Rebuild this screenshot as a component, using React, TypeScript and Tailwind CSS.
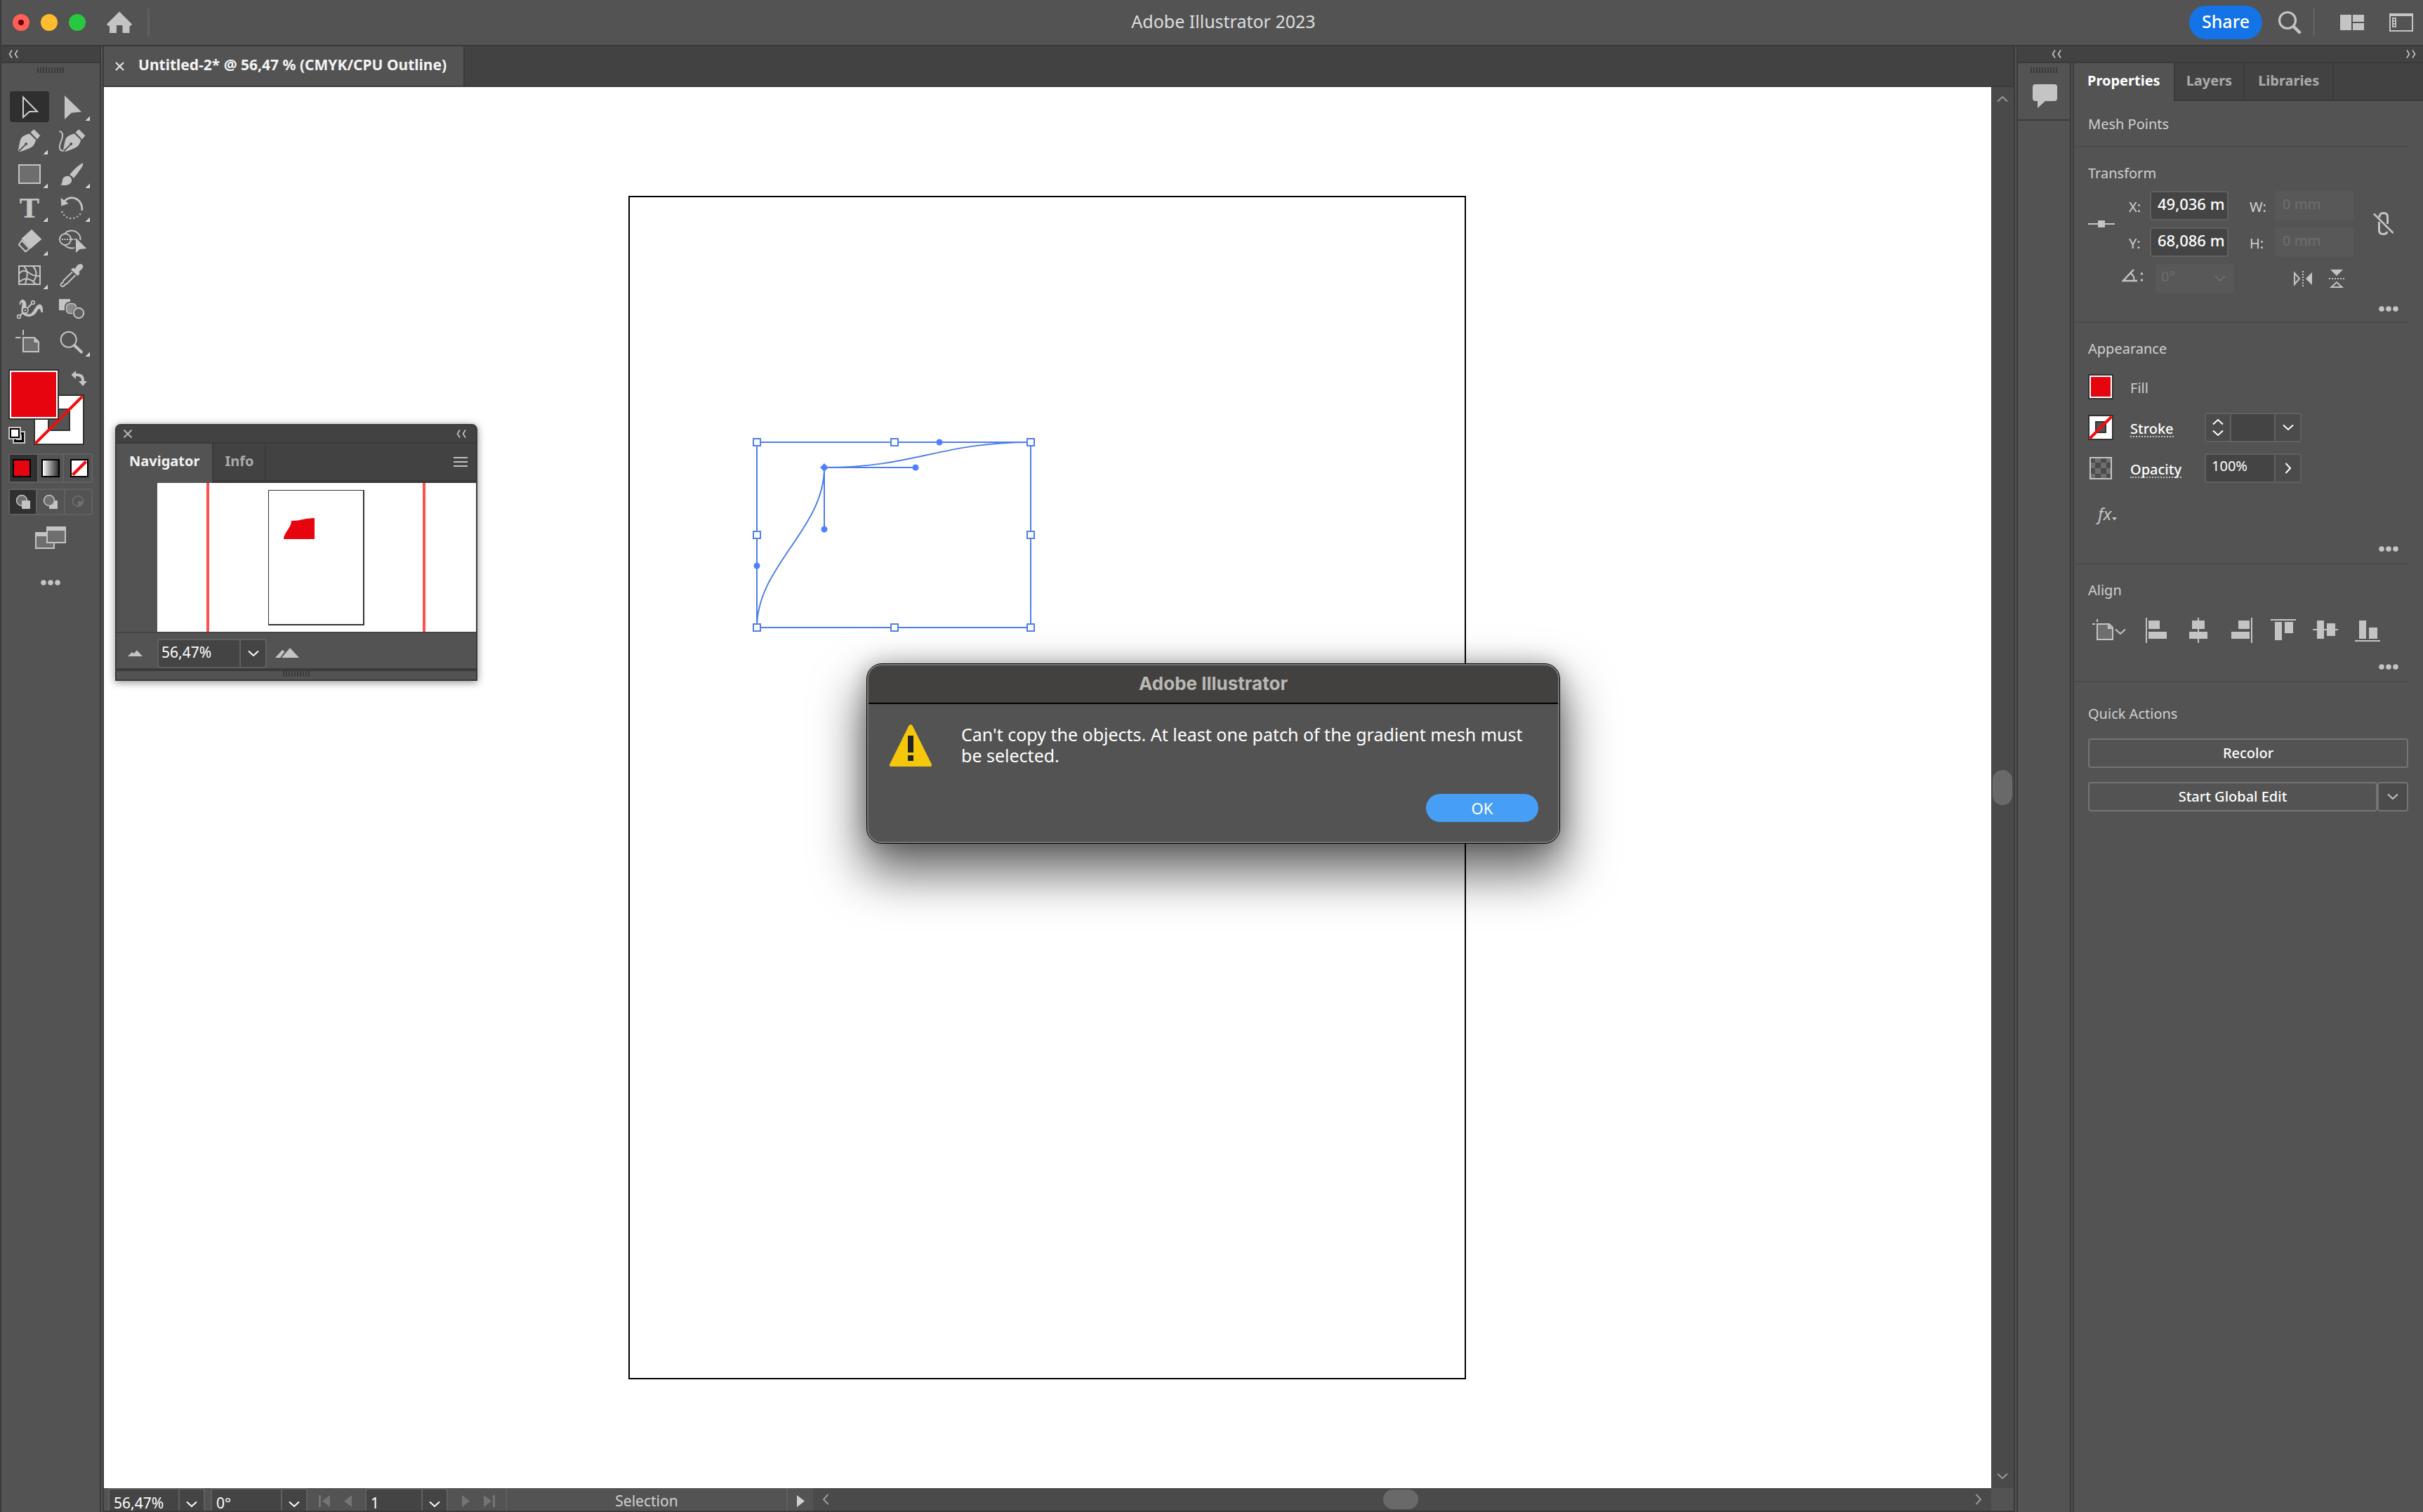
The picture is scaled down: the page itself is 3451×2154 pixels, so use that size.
import React from "react";

const fill = "#c4c4c4";
const bg = "#535353";

type IconProps = { className?: string };

const DoubleChevron = ({ flip = false }: { flip?: boolean }) => (
  <svg width="14" height="12" viewBox="0 0 14 12" fill="none" stroke="#c8c8c8" strokeWidth="1.6" className={flip ? "rotate-180" : ""}>
    <path d="M5 0.5 L1.5 6 L5 11.5 M13 0.5 L9.5 6 L13 11.5" />
  </svg>
);

const Chevron = ({ className = "text-white" }: IconProps) => (
  <svg width="16" height="10" viewBox="0 0 16 10" fill="none" stroke="currentColor" strokeWidth="2" className={className}>
    <path d="M1 1.5 L8 8 L15 1.5" />
  </svg>
);

const Grip = () => (
  <svg width="38" height="8" viewBox="0 0 38 8" stroke="#3a3a3a" strokeWidth="2">
    {[1, 5, 9, 13, 17, 21, 25, 29, 33, 37].map((x) => (
      <path key={x} d={`M${x} 0 V8`} />
    ))}
  </svg>
);

const Dots = ({ label }: { label: string }) => (
  <button aria-label={label}>
    <svg width="28" height="8" viewBox="0 0 28 8" fill={fill}>
      <circle cx="4" cy="4" r="3.8" />
      <circle cx="14" cy="4" r="3.8" />
      <circle cx="24" cy="4" r="3.8" />
    </svg>
  </button>
);

const Nib = () => (
  <>
    <path d="M34.3 8.3 L43.3 17 L39 22.5 L29.5 12.5 Z" fill={fill} />
    <path d="M28 14.5 L37.2 23.5 C36 27 35 30 32.5 32.5 C28 36 22 37.5 16 39.7 L12 39.5 L12 38 C13.5 31 14 24 16.7 20 C19.5 17 24 15.5 28 14.5 Z" fill={fill} />
    <path d="M13 39 L22.5 29.8" stroke={bg} strokeWidth="1.8" />
    <circle cx="23.2" cy="29" r="2" fill={bg} />
  </>
);

const tools: { name: string; more?: boolean; active?: boolean; art: React.ReactNode }[] = [
  {
    name: "Selection Tool",
    active: true,
    art: <path d="M19 10.5 V39 L28 31 L39 30.8 Z" fill="none" stroke="#d0d0d0" strokeWidth="2" />,
  },
  { name: "Direct Selection Tool", more: true, art: <path d="M18 8 V42 L27.7 32.7 L42 31.3 Z" fill={fill} /> },
  { name: "Pen Tool", more: true, art: <Nib /> },
  {
    name: "Curvature Tool",
    art: (
      <>
        <g transform="translate(4 0)">
          <Nib />
        </g>
        <path d="M10.5 11 C15 11.5 16 16 14.5 21 C12 28 7 38 16 39" fill="none" stroke={fill} strokeWidth="2" />
      </>
    ),
  },
  { name: "Rectangle Tool", more: true, art: <rect x="13" y="11" width="30" height="26" fill="#6e6e6e" stroke={fill} strokeWidth="2" /> },
  {
    name: "Paintbrush Tool",
    more: true,
    art: (
      <g fill={fill}>
        <path d="M44.3 8.5 C44.5 12 42 15.5 38.5 20 C36 23.5 33 27.5 30.5 30 C29.5 27.5 27.5 26 25 25.2 C29 20 34 15 38 12 C41 9.7 43 8 44.3 8.5 Z" />
        <path d="M24 27 C27 28 28.5 31 28 34 C27 39 19 41.5 12 39.3 C16 37 13.5 32 16.7 29 C19 27 21.5 26.5 24 27 Z" />
      </g>
    ),
  },
  {
    name: "Type Tool",
    more: true,
    art: (
      <text x="28" y="38" textAnchor="middle" fill={fill} className="font-['DejaVu_Serif'] text-[38px] font-bold">
        T
      </text>
    ),
  },
  {
    name: "Rotate Tool",
    more: true,
    art: (
      <g fill="none" stroke={fill}>
        <path d="M12.7 9.7 L13.3 21.5 L23.5 18 Z" fill={fill} stroke="none" />
        <path d="M17 16.5 C20 11 25 9.3 30 9.8 C38 11 43.5 18 42.8 28" strokeWidth="2.8" />
        <path d="M14 29 C17 37 24 40 30 39 C36 38 40 34 42.5 30" strokeWidth="2.2" strokeDasharray="2 3.2" />
      </g>
    ),
  },
  {
    name: "Eraser Tool",
    more: true,
    art: (
      <>
        <path d="M31 6.7 L45.3 20.7 L29.5 34.5 L16.5 20 Z" fill={fill} />
        <path d="M17 22.5 L12.8 28.5 L22.5 38.5 L27.8 34 Z" fill="none" stroke={fill} strokeWidth="2" strokeLinejoin="round" />
      </>
    ),
  },
  {
    name: "Shape Builder Tool",
    art: (
      <g fill="none" stroke={fill} strokeWidth="2">
        <circle cx="19" cy="21" r="8" />
        <path d="M18 13 C22 8 29 7.5 34 10 C39 13 41 17 40.5 22 M18 29 C21 33 27 34.5 32 33" />
        <path d="M14 21 H34" strokeDasharray="2 1.5" />
        <path d="M34 19 V40 L39.7 35 L49.3 34 Z" fill={fill} stroke="none" />
      </g>
    ),
  },
  {
    name: "Mesh Tool",
    more: true,
    art: (
      <g fill="none" stroke={fill} strokeWidth="2">
        <rect x="13" y="11" width="30" height="26" />
        <path d="M13 22 C18 16 22 17 28 21 C33 25 38 25.5 43 25" />
        <path d="M13 34 C20 28 26 28 32 32 L37 37" />
        <path d="M20 11 C25 17 26 22 24 28 L22 37" />
        <path d="M33 11 C38 17 39 23 36 29 L33 34" />
      </g>
    ),
  },
  {
    name: "Eyedropper Tool",
    art: (
      <>
        <path d="M27 16 L30 13.5 L33 15 C35 11 38 7.5 41.5 8.2 C45 9 45 13 42.5 15.5 L38.5 19 L39.5 22 L36.5 25 Z" fill={fill} />
        <path d="M29 19.5 L16.5 31.5 L15.5 34.5 C12.5 35.5 11.5 38 13.5 39.5 C15.5 40.8 17.5 39.5 18.5 37.5 L21.5 36 L33.5 24" fill="none" stroke={fill} strokeWidth="2" />
      </>
    ),
  },
  {
    name: "Puppet Warp Tool",
    art: (
      <g fill="none" stroke={fill}>
        <path d="M13.5 18 C14.5 9.500 20.500 8.500 23 15.500 C25 21 20 30 26 31.500 C34 33 35 19 42 17.500 C46 17.500 47.500 22 47 29 L44.500 29 C43.500 22.500 41 23 39 27 C35 35.500 24 38 18 31 C14 27 19 18 17.500 15 C16 14 15.500 16 15.500 18 Z" fill={fill} stroke="none" />
        <path d="M15 33 L20 28 M24 24 L31 17" strokeWidth="2" />
        <circle cx="13" cy="35" r="2.4" fill={bg} strokeWidth="1.6" />
        <circle cx="33" cy="15" r="2.4" fill={bg} strokeWidth="1.6" />
        <circle cx="22" cy="26" r="4" fill={bg} strokeWidth="1.6" />
        <circle cx="22" cy="26" r="1.2" fill={fill} stroke="none" />
      </g>
    ),
  },
  {
    name: "Blend Tool",
    art: (
      <>
        <rect x="10" y="10" width="16" height="16" fill={fill} />
        <rect x="20" y="16" width="15" height="15" rx="5" fill="#8a8a8a" stroke={bg} strokeWidth="4" />
        <rect x="20.5" y="16.5" width="14" height="14" rx="5" fill="#8a8a8a" stroke={fill} strokeWidth="1.5" />
        <circle cx="38" cy="30" r="9" fill={bg} />
        <circle cx="38" cy="30" r="7.2" fill="#606060" stroke={fill} strokeWidth="2" />
      </>
    ),
  },
  {
    name: "Artboard Tool",
    art: (
      <>
        <path d="M19 6 V13.5 M8 17 H15.5" stroke={fill} strokeWidth="2" />
        <path d="M19 17 H35 L41 23 V37 H19 Z" fill="#6e6e6e" stroke={fill} strokeWidth="2" />
        <path d="M34.5 17 V24 H41 Z" fill={fill} />
      </>
    ),
  },
  {
    name: "Zoom Tool",
    more: true,
    art: (
      <g fill="none" stroke={fill}>
        <circle cx="23.7" cy="19.7" r="11" strokeWidth="2" />
        <path d="M32 28 L42 37.5" strokeWidth="4" strokeLinecap="round" />
      </g>
    ),
  },
];

const Toolbar = () => (
  <aside className="flex flex-col w-[142px] shrink-0 bg-[#535353] border-r-2 border-[#3a3a3a]">
    <div className="h-6 bg-[#424242] border-b-2 border-[#3a3a3a] flex items-center px-2.5">
      <DoubleChevron />
    </div>
    <div className="flex justify-center pt-1.5 h-[38px]">
      <Grip />
    </div>
    <div className="grid grid-cols-2 pl-3 pr-2">
      {tools.map((tool) => (
        <button key={tool.name} aria-label={tool.name} className="h-12">
          <svg width="60" height="48" viewBox="0 0 60 48">
            {tool.active && <rect x="0" y="2" width="56" height="44" rx="4" fill="#2f2f2f" />}
            {tool.art}
            {tool.more && <path d="M54 37.5 V44 H47.5 Z" fill="#d8d8d8" />}
          </svg>
        </button>
      ))}
    </div>
    <svg className="mt-3.5 ml-2.5" width="114" height="108" viewBox="12 526 114 108">
      <rect x="49" y="563" width="70" height="70" fill="#fff" stroke="#323232" strokeWidth="2" />
      <rect x="69" y="583" width="30" height="30" fill={bg} stroke="#323232" strokeWidth="2" />
      <path d="M50.5 631.5 L117.5 564.5" stroke="#f20d0d" strokeWidth="4" />
      <rect x="13" y="527" width="70" height="70" fill="#fff" stroke="#323232" strokeWidth="2" />
      <rect x="16" y="530" width="64" height="64" fill="#e6040f" />
      <path d="M106 534 H110 Q118 534 118 542 V544" fill="none" stroke={fill} strokeWidth="4" />
      <path d="M108 528 V540 L101.5 534 Z M112 543 H124 L118 550 Z" fill={fill} />
      <rect x="19" y="615" width="16" height="16" fill="#000" stroke={fill} strokeWidth="2" />
      <rect x="24" y="620" width="6" height="6" fill="#000" stroke={fill} strokeWidth="2" />
      <rect x="13" y="609" width="16" height="16" fill="#fff" stroke={fill} strokeWidth="2" />
      <rect x="15" y="611" width="12" height="12" fill="#fff" stroke="#000" strokeWidth="2" />
    </svg>
    <div className="mt-3 mx-2.5 flex h-[42px] border-2 border-[#606060] rounded">
      <button aria-label="Color" className="flex-1 flex items-center justify-center pr-1 bg-[#303030]">
        <span className="size-[26px] bg-[#e6040f] border-2 border-black"></span>
      </button>
      <button aria-label="Gradient" className="flex-1 flex items-center justify-center border-x-2 border-[#606060]">
        <span className="size-[26px] bg-linear-to-r from-white to-[#333] border-2 border-black"></span>
      </button>
      <button aria-label="None" className="flex-1 flex items-center justify-center pl-1">
        <svg width="26" height="26" viewBox="0 0 26 26">
          <rect x="1" y="1" width="24" height="24" fill="#fff" stroke="#000" strokeWidth="2" />
          <path d="M3.5 22.5 L22.5 3.5" stroke="#f20d0d" strokeWidth="4.5" />
        </svg>
      </button>
    </div>
    <div className="mt-2 mx-2.5 flex h-[38px] border-2 border-[#606060] rounded">
      <button aria-label="Draw Normal" className="flex-1 flex items-center justify-center bg-[#303030]">
        <svg width="22" height="22" viewBox="0 0 22 22">
          <circle cx="9" cy="9" r="7.5" fill="#6e6e6e" stroke={fill} strokeWidth="1.5" />
          <rect x="9" y="9" width="12" height="12" rx="1" fill={fill} />
        </svg>
      </button>
      <button aria-label="Draw Behind" className="flex-1 flex items-center justify-center border-x-2 border-[#606060]">
        <svg width="22" height="22" viewBox="0 0 22 22">
          <rect x="9" y="9" width="12" height="12" rx="1" fill={fill} />
          <circle cx="9" cy="9" r="7.5" fill="#6e6e6e" stroke={fill} strokeWidth="1.5" />
        </svg>
      </button>
      <button aria-label="Draw Inside" disabled className="flex-1 flex items-center justify-center">
        <svg width="22" height="22" viewBox="0 0 22 22">
          <circle cx="11" cy="10" r="7.5" fill="none" stroke="#717171" strokeWidth="1.5" />
          <path d="M11 10 H18 Q17 16 11 17 Z" fill="#717171" />
        </svg>
      </button>
    </div>
    <button aria-label="Change Screen Mode" className="mt-4 mx-auto">
      <svg width="44" height="32" viewBox="0 0 44 32">
        <rect x="1" y="9" width="26" height="22" fill="#6e6e6e" stroke={fill} strokeWidth="2" />
        <rect x="1" y="8" width="26" height="6" fill={fill} />
        <rect x="17" y="1" width="26" height="22" fill="#6e6e6e" stroke={fill} strokeWidth="2" />
        <rect x="17" y="0" width="26" height="6" fill={fill} />
      </svg>
    </button>
    <div className="mt-11 flex justify-center">
      <Dots label="Edit Toolbar" />
    </div>
  </aside>
);

const TitleBar = () => (
  <header className="relative flex items-center justify-between h-[66px] shrink-0 bg-[#535353] border-b-2 border-[#3a3a3a] pl-4 pr-3.5">
    <div className="flex items-center gap-4">
      <button aria-label="Close" className="size-6 rounded-full bg-[#ff5f57] flex items-center justify-center">
        <span className="size-2 rounded-full bg-[#6b0500]"></span>
      </button>
      <button aria-label="Minimize" className="size-6 rounded-full bg-[#febc2e]"></button>
      <button aria-label="Zoom" className="size-6 rounded-full bg-[#28c840]"></button>
      <button aria-label="Home" className="ml-3.5">
        <svg width="36" height="32" viewBox="0 0 36 32" fill={fill}>
          <path d="M18 0.5 L36 18.5 L34 21 H32.5 V31 H22.5 V20 H14 V31 H4 V21 H2 L0 18.5 Z" />
        </svg>
      </button>
      <span className="ml-1.5 w-[3px] h-10 bg-[#5f5f5f]"></span>
    </div>
    <h1 className="absolute inset-0 flex items-center justify-center pl-8 pb-0.5 text-[25px] text-[#dedede] pointer-events-none">Adobe Illustrator 2023</h1>
    <div className="relative flex items-center">
      <button className="w-[104px] h-12 pb-0.5 rounded-full bg-[#1473e6] text-white text-[25px] font-medium">Share</button>
      <button aria-label="Search" className="ml-[22px]">
        <svg width="34" height="34" viewBox="0 0 34 34" fill="none" stroke={fill}>
          <circle cx="14" cy="14" r="11.5" strokeWidth="3.2" />
          <path d="M23 23 L31 31" strokeWidth="4.5" strokeLinecap="round" />
        </svg>
      </button>
      <span className="ml-4 w-[3px] h-10 bg-[#5f5f5f]"></span>
      <button aria-label="Arrange Documents" className="ml-9">
        <svg width="34" height="22" viewBox="0 0 34 22" fill={fill}>
          <path d="M0 0 H16 V22 H0 Z M18 0 H34 V10 H18 Z M18 12 H34 V22 H18 Z" />
        </svg>
      </button>
      <button aria-label="Switch Workspace" className="ml-9">
        <svg width="34" height="26" viewBox="0 0 34 26" fill="none" stroke={fill} strokeWidth="2">
          <rect x="1" y="1" width="32" height="24" />
          <path d="M1 3 H33" />
          <rect x="4" y="6" width="6" height="14" fill={fill} stroke="none" />
          <path d="M6 9 H8 M6 13 H8 M6 17 H8" stroke="#333" />
        </svg>
      </button>
    </div>
  </header>
);

const anchors = [
  [1078, 630],
  [1274, 630],
  [1468, 630],
  [1078, 762],
  [1468, 762],
  [1078, 894],
  [1274, 894],
  [1468, 894],
];

const handles = [
  [1338, 630],
  [1304, 666],
  [1174, 754],
  [1078, 806],
];

const Artwork = () => (
  <svg className="block w-full h-full">
    <g transform="translate(-148 -124)" fill="none">
      <rect x="896" y="280" width="1191" height="1684" stroke="#000" strokeWidth="2" />
      <g stroke="#4f7fe8" strokeWidth="2">
        <rect x="1078" y="630" width="390" height="264" />
        <path d="M1174 754 V666 H1304" />
        <path d="M1174 666 C1304 666 1338 630 1468 630" />
        <path d="M1174 666 C1174 754 1078 806 1078 894" />
        {anchors.map(([x, y]) => (
          <rect key={`${x}-${y}`} x={x - 5} y={y - 5} width="10" height="10" fill="#fff" />
        ))}
      </g>
      <g fill="#4f80ff">
        {handles.map(([x, y]) => (
          <circle key={`${x}-${y}`} cx={x} cy={y} r="4.5" />
        ))}
        <path d="M1174 660 L1180 666 L1174 672 L1168 666 Z" />
      </g>
    </g>
  </svg>
);

const Navigator = () => (
  <section className="absolute left-4 top-[480px] w-[516px] bg-[#535353] border-2 border-[#3a3a3a] rounded-t-lg overflow-hidden shadow-[0_2px_12px_rgba(0,0,0,0.45)]">
    <div className="flex items-center justify-between h-[26px] pl-2.5 pr-3.5 bg-[#424242] border-b-2 border-[#3a3a3a]">
      <button aria-label="Close panel">
        <svg width="12" height="12" viewBox="0 0 12 12" stroke="#b4b4b4" strokeWidth="2">
          <path d="M0.5 0.5 L11.5 11.5 M11.5 0.5 L0.5 11.5" />
        </svg>
      </button>
      <DoubleChevron />
    </div>
    <div className="flex h-14 bg-[#424242] text-[20px] font-bold">
      <button className="px-[18px] pb-1.5 bg-[#535353] text-[#f2f2f2]">Navigator</button>
      <button className="px-4 pb-0.5 border-x-2 border-b-4 border-[#3a3a3a] text-[#ababab]">Info</button>
      <div className="flex-1 flex justify-end items-center pr-3 border-b-4 border-[#3a3a3a]">
        <svg width="20" height="16" viewBox="0 0 20 16" stroke="#c0c0c0" strokeWidth="2">
          <path d="M0 2 H20 M0 8 H20 M0 14 H20" />
        </svg>
      </div>
    </div>
    <svg className="block ml-auto" width="454" height="212" viewBox="224 688 454 212">
      <rect x="224" y="688" width="454" height="212" fill="#fff" />
      <path d="M296 688 V900 M604 688 V900" stroke="#ff4f4f" strokeWidth="4" />
      <rect x="382.5" y="698.5" width="135" height="192" fill="none" stroke="#333" />
      <path d="M518 698 V891 M382 890 H519" stroke="#333" strokeWidth="2" />
      <path d="M404 768 C404 759 415 752 415 742 C428 742 434 738 448 738 V768 Z" fill="#e6040f" />
    </svg>
    <div className="flex items-end h-[52px] pl-4 border-t-2 border-[#454545]">
      <svg className="mb-4" width="22" height="10" viewBox="0 0 22 10" fill={fill}>
        <path d="M0 9 L6 3 L8.5 5 L13 0.5 L21 9 Z" />
      </svg>
      <label className="ml-5 flex w-[156px] h-[42px] rounded border-2 border-[#606060] bg-[#444] text-[21px] text-white">
        <select aria-label="Navigator zoom" className="appearance-none flex-1 pl-1 pb-0.5">
          <option>56,47%</option>
        </select>
        <span className="flex items-center justify-center w-[37px] border-l-2 border-[#606060] pointer-events-none">
          <Chevron />
        </span>
      </label>
      <svg className="ml-3 mb-3.5" width="36" height="16" viewBox="0 0 36 16" fill={fill}>
        <path d="M0 15 L10 4 L13.5 6 L7 15 Z M9 15 L21 1 L34 15 Z" />
      </svg>
    </div>
    <div className="flex justify-center h-4 border-t-4 border-[#3a3a3a]">
      <Grip />
    </div>
  </section>
);

const Alert = () => (
  <div
    role="alertdialog"
    aria-labelledby="alert-title"
    className="absolute left-[1232px] top-[945px] w-[988px] rounded-[22px] border border-black bg-[#535353] shadow-[0_36px_70px_6px_rgba(0,0,0,0.6),0_0_30px_rgba(0,0,0,0.25)]"
  >
    <div className="rounded-[21px] border-2 border-[#777] overflow-hidden">
      <h2 id="alert-title" className="h-[55px] flex items-center justify-center pb-0.5 bg-[#42413f] border-b-2 border-black font-['Inter'] text-[26px] font-bold text-[#b9b8b5]">
        Adobe Illustrator
      </h2>
      <div className="flex gap-10 pl-7 pr-11 pt-6">
        <svg className="mt-1 shrink-0" width="64" height="62" viewBox="0 0 64 62">
          <path d="M32 1 Q34 1 35 3.5 L62 58 Q62.5 61 60 61 H4 Q1.5 61 2 58 L29 3.5 Q30 1 32 1 Z" fill="#f5c70a" />
          <path d="M28 17 H36 V41 H28 Z M28 45 H36 V53 H28 Z" fill="#222" />
        </svg>
        <p className="text-[25px] leading-[30px] text-white pt-1">Can't copy the objects. At least one patch of the gradient mesh must be selected.</p>
      </div>
      <div className="flex justify-end pt-[38px] pr-7 pb-7">
        <button className="w-40 h-10 rounded-full bg-[#469ff5] text-white text-[22px]">OK</button>
      </div>
    </div>
  </div>
);

const StatusSelect = ({ label, value, className }: { label: string; value: string; className: string }) => (
  <label className={`flex h-8 border-2 border-b-0 border-[#606060] rounded-t bg-[#444] text-[21px] text-white ${className}`}>
    <select aria-label={label} className="appearance-none flex-1 min-w-0 pl-1.5 pt-1">
      <option>{value}</option>
    </select>
    <span className="flex items-end justify-center pb-1 w-9 border-l-2 border-[#606060] pointer-events-none">
      <Chevron />
    </span>
  </label>
);

const StatusBar = () => (
  <footer className="flex h-[34px] shrink-0 bg-[#535353] border-b-2 border-[#3a3a3a]">
    <div className="w-1.5" />
    <StatusSelect label="Zoom level" value="56,47%" className="w-[138px]" />
    <StatusSelect label="Rotate view" value="0°" className="ml-2 w-[138px]" />
    <div className="flex items-center gap-5 w-[82px] pl-4 pt-1">
      <svg width="16" height="17" viewBox="0 0 16 17" fill="#747474">
        <path d="M0 0 H3 V17 H0 Z M16 0 V17 L5 8.5 Z" />
      </svg>
      <svg width="11" height="17" viewBox="0 0 11 17" fill="#747474">
        <path d="M11 0 V17 L0 8.5 Z" />
      </svg>
    </div>
    <StatusSelect label="Artboard" value="1" className="w-[118px]" />
    <div className="flex items-center gap-5 w-[84px] pl-5 pt-1 border-r-2 border-[#5e5e5e]">
      <svg width="11" height="17" viewBox="0 0 11 17" fill="#747474">
        <path d="M0 0 V17 L11 8.5 Z" />
      </svg>
      <svg width="16" height="17" viewBox="0 0 16 17" fill="#747474">
        <path d="M13 0 H16 V17 H13 Z M0 0 V17 L11 8.5 Z" />
      </svg>
    </div>
    <div className="flex items-end justify-center w-[400px] text-[21px] leading-7 text-[#d0d0d0] border-r-2 border-[#5e5e5e]">Selection</div>
    <button aria-label="Status menu" className="flex items-center justify-center w-9 pt-1">
      <svg width="11" height="17" viewBox="0 0 11 17" fill="#d0d0d0">
        <path d="M0 0 V17 L11 8.5 Z" />
      </svg>
    </button>
    <div className="flex-1 flex items-center bg-[#4a4a4a] px-2.5 text-[#9a9a9a]">
      <Chevron className="rotate-90" />
      <span className="w-[786px] shrink"></span>
      <span className="w-[50px] h-7 rounded-full bg-[#696969]"></span>
      <Chevron className="-rotate-90 ml-auto" />
    </div>
    <div className="w-8" />
  </footer>
);

const Document = () => (
  <main className="flex-1 min-w-0 flex flex-col ml-0.5 border-r-2 border-l-2 border-[#3a3a3a]">
    <div className="flex h-[58px] shrink-0 bg-[#424242] border-b-2 border-[#3a3a3a]">
      <div className="flex items-center gap-5 pl-4 pr-6 bg-[#535353] border-r-2 border-[#3a3a3a] text-[21px] font-bold text-[#f4f4f4]">
        <button aria-label="Close document">
          <svg width="13" height="13" viewBox="0 0 13 13" stroke="#e8e8e8" strokeWidth="2">
            <path d="M1 1 L12 12 M12 1 L1 12" />
          </svg>
        </button>
        <span className="pb-0.5">Untitled-2* @ 56,47 % (CMYK/CPU Outline)</span>
      </div>
    </div>
    <div className="flex-1 min-h-0 flex">
      <div className="relative flex-1 bg-white">
        <Artwork />
        <Navigator />
      </div>
      <div className="flex flex-col items-center w-8 py-3 bg-[#4a4a4a]">
        <Chevron className="rotate-180 text-[#9a9a9a]" />
        <span className="flex-1"></span>
        <span className="w-7 h-[50px] rounded-full bg-[#696969]"></span>
        <span className="flex-1"></span>
        <Chevron className="text-[#9a9a9a]" />
      </div>
    </div>
    <StatusBar />
  </main>
);

type FieldProps = { label: string; id: string; value: string; labelWidth: string; disabled?: boolean };

const Field = ({ label, id, value, labelWidth, disabled = false }: FieldProps) => (
  <div className="flex items-center">
    <label htmlFor={id} className={`pt-1 text-[20px] ${labelWidth}`}>
      {label}
    </label>
    <input
      id={id}
      defaultValue={value}
      disabled={disabled}
      className="w-28 h-[42px] rounded border-2 border-[#606060] bg-[#444] pl-[9px] pb-1.5 text-[22px] font-medium text-white disabled:border-[#585858] disabled:bg-[#585858] disabled:text-[20px] disabled:text-[#6c6c6c]"
    />
  </div>
);

const alignIcons: [string, string][] = [
  ["Horizontal Align Left", "M2 0 H4 V36 H2 Z M6 4 H22 V16 H6 Z M6 20 H32 V30 H6 Z"],
  ["Horizontal Align Center", "M16 0 H18 V36 H16 Z M8 4 H26 V16 H8 Z M4 20 H30 V30 H4 Z"],
  ["Horizontal Align Right", "M32 0 H34 V36 H32 Z M14 4 H30 V16 H14 Z M4 20 H30 V30 H4 Z"],
  ["Vertical Align Top", "M0 2 H36 V4 H0 Z M6 6 H16 V32 H6 Z M20 6 H32 V22 H20 Z"],
  ["Vertical Align Center", "M0 16 H36 V18 H0 Z M6 4 H16 V30 H6 Z M20 8 H32 V26 H20 Z"],
  ["Vertical Align Bottom", "M0 32 H36 V34 H0 Z M6 4 H16 V30 H6 Z M20 14 H32 V30 H20 Z"],
];

const Properties = () => (
  <div className="flex-1 flex flex-col text-[20px] text-[#d0d0d0]">
    <div className="flex h-[54px] shrink-0 bg-[#424242] font-bold text-[#ababab]">
      <button className="px-[19px] pb-1 bg-[#535353] text-white">Properties</button>
      <button className="px-4 pb-0.5 border-x-2 border-b-2 border-[#3a3a3a]">Layers</button>
      <button className="px-[19px] pb-0.5 border-r-2 border-b-2 border-[#3a3a3a]">Libraries</button>
      <div className="flex-1 border-b-2 border-[#3a3a3a]" />
    </div>
    <div className="pr-[21px]">
      <div className="h-[66px] pl-5 pt-[18px] border-b-2 border-[#4b4b4b]">Mesh Points</div>
      <section className="h-[250px] pl-5 pt-[22px] border-b-2 border-[#4b4b4b]">
        <h3>Transform</h3>
        <div className="flex items-center mt-2.5">
          <svg width="38" height="10" viewBox="0 0 38 10" fill={fill}>
            <path d="M0 4 H38 V6 H0 Z M14 0 H24 V10 H14 Z" />
          </svg>
          <div className="flex flex-col gap-2.5 ml-5">
            <Field label="X:" id="x" value="49,036 m" labelWidth="w-[30px]" />
            <Field label="Y:" id="y" value="68,086 m" labelWidth="w-[30px]" />
          </div>
          <div className="flex flex-col gap-2.5 ml-[30px]">
            <Field label="W:" id="w" value="0 mm" labelWidth="w-9" disabled />
            <Field label="H:" id="h" value="0 mm" labelWidth="w-9" disabled />
          </div>
          <button aria-label="Constrain proportions" className="ml-7">
            <svg width="30" height="34" viewBox="0 0 30 34" fill="none" stroke={fill}>
              <path d="M9 8 V6 Q10 1.5 15 1.5 Q20.5 1.5 20.5 7 V17 M8.5 14 V26 Q8.5 31.5 14 31.5 Q19 31.5 20 28" strokeWidth="3" />
              <path d="M1 2.5 L28.5 30" strokeWidth="2.5" />
            </svg>
          </button>
        </div>
        <div className="flex items-center mt-2.5">
          <label htmlFor="angle" className="flex items-center ml-12 w-12 pb-2">
            <svg width="32" height="20" viewBox="0 0 32 20" fill="none" stroke={fill} strokeWidth="2">
              <path d="M17 1 L2 17 H22" strokeWidth="2.5" />
              <path d="M12 6 Q18 9 17.5 17" />
              <path d="M27 7 H30 M27 16 H30" strokeWidth="3" />
            </svg>
          </label>
          <div className="flex items-center w-28 h-[42px] rounded bg-[#585858] pr-3 text-[#6c6c6c]">
            <select id="angle" aria-label="Rotate" disabled className="appearance-none flex-1 pl-2 pb-1.5">
              <option>0°</option>
            </select>
            <Chevron className="text-[#6c6c6c]" />
          </div>
          <button aria-label="Flip horizontally" className="ml-[84px]">
            <svg width="28" height="24" viewBox="0 0 28 24" fill="none" stroke={fill} strokeWidth="2">
              <path d="M2 4 V20 L9 12 Z" />
              <path d="M14 1 V23" strokeDasharray="2 2" />
              <path d="M27 3 V21 L18 12 Z" fill={fill} stroke="none" />
            </svg>
          </button>
          <button aria-label="Flip vertically" className="ml-[22px]">
            <svg width="24" height="28" viewBox="0 0 24 28" fill="none" stroke={fill} strokeWidth="2">
              <path d="M3 1 H21 L12 10 Z" fill={fill} stroke="none" />
              <path d="M1 14 H23" strokeDasharray="2 2" />
              <path d="M4.5 26 H19.5 L12 19 Z" />
            </svg>
          </button>
        </div>
        <div className="flex justify-end pr-3.5 mt-[18px]">
          <Dots label="More transform options" />
        </div>
      </section>
      <section className="h-[344px] pl-5 pt-[22px] border-b-2 border-[#4b4b4b]">
        <h3>Appearance</h3>
        <div className="flex items-center mt-3.5 h-[50px]">
          <button aria-label="Fill color" className="size-9 border-2 border-[#323232] bg-white p-0.5">
            <span className="block size-full bg-[#e6040f]"></span>
          </button>
          <span className="ml-6 pt-1">Fill</span>
        </div>
        <div className="flex items-center mt-2 h-[50px] text-white">
          <button aria-label="Stroke color">
            <svg width="36" height="36" viewBox="0 0 36 36">
              <rect x="1" y="1" width="34" height="34" fill="#fff" stroke="#323232" strokeWidth="2" />
              <rect x="11" y="10" width="14" height="15" fill={bg} stroke="#323232" strokeWidth="2" />
              <path d="M2.5 33.5 L33.5 2.5" stroke="#f20d0d" strokeWidth="4" />
            </svg>
          </button>
          <label htmlFor="stroke" className="ml-6 mt-1 w-[106px] font-medium">
            <span className="border-b-2 border-dotted border-[#c4c4c4] leading-5 inline-block">Stroke</span>
          </label>
          <div className="flex w-[138px] h-[42px] rounded border-2 border-[#606060] bg-[#444]">
            <div className="flex flex-col items-center justify-between w-[34px] py-1.5 bg-[#4b4b4b]">
              <button aria-label="Increase stroke">
                <Chevron className="rotate-180" />
              </button>
              <button aria-label="Decrease stroke">
                <Chevron />
              </button>
            </div>
            <input id="stroke" defaultValue="" className="flex-1 min-w-0 border-x-2 border-[#606060]" />
            <button aria-label="Stroke presets" className="flex items-center justify-center w-[35px] bg-[#4b4b4b]">
              <Chevron />
            </button>
          </div>
        </div>
        <div className="flex items-center mt-2 h-[50px] text-white">
          <svg className="mx-0.5" width="32" height="32" viewBox="0 0 32 32">
            <rect x="1" y="1" width="30" height="30" fill="#4b4b4b" stroke={fill} strokeWidth="2" />
            <path d="M8 2 h8 v6 h-8z M24 2 h6 v6 h-6z M2 8 h6 v8 h-6z M16 8 h8 v8 h-8z M8 16 h8 v8 h-8z M24 16 h6 v8 h-6z M2 24 h6 v6 h-6z M16 24 h8 v6 h-8z" fill="#6e6e6e" />
          </svg>
          <label htmlFor="opacity" className="ml-6 mt-1 w-[106px] font-medium">
            <span className="border-b-2 border-dotted border-[#c4c4c4] leading-5 inline-block">Opacity</span>
          </label>
          <div className="flex w-[138px] h-[42px] rounded border-2 border-[#606060] bg-[#444]">
            <input id="opacity" defaultValue="100%" className="flex-1 min-w-0 pl-2 pb-1.5 text-[20px]" />
            <button aria-label="Opacity slider" className="flex items-center justify-center w-[37px] border-l-2 border-[#606060] bg-[#4b4b4b]">
              <Chevron className="-rotate-90" />
            </button>
          </div>
        </div>
        <button aria-label="Choose an effect" className="flex items-end ml-3.5 mt-6 text-2xl italic text-[#c4c4c4]">
          fx
          <svg className="mb-1.5" width="8" height="5" viewBox="0 0 8 5" fill={fill}>
            <path d="M1 0 H8 L4.5 4.5 Z" />
          </svg>
        </button>
        <div className="flex justify-end pr-3.5 mt-[30px]">
          <Dots label="More appearance options" />
        </div>
      </section>
      <section className="h-[168px] pl-5 pt-[22px] border-b-2 border-[#4b4b4b]">
        <h3>Align</h3>
        <div className="flex items-center mt-6">
          <button aria-label="Align to" className="flex items-center ml-1.5 mr-[26px]">
            <svg width="32" height="36" viewBox="0 0 32 36">
              <path d="M7 2 V6 M0 9 H4" stroke={fill} strokeWidth="2" />
              <path d="M7 9 H24 L29 14 V31 H7 Z" fill="#6e6e6e" stroke={fill} strokeWidth="2" />
              <path d="M22 9 V16 H29 Z" fill={fill} />
            </svg>
            <Chevron className="text-[#c4c4c4] mt-1" />
          </button>
          <div className="flex gap-6">
            {alignIcons.map(([name, d]) => (
              <button key={name} aria-label={name}>
                <svg width="36" height="36" viewBox="0 0 36 36" fill={fill}>
                  <path d={d} />
                </svg>
              </button>
            ))}
          </div>
        </div>
        <div className="flex justify-end pr-3.5 mt-[30px]">
          <Dots label="More align options" />
        </div>
      </section>
      <section className="pl-5 pt-[30px]">
        <h3>Quick Actions</h3>
        <button className="mt-5 w-full h-[42px] rounded border-2 border-[#747474] text-white font-medium">Recolor</button>
        <div className="flex mt-5">
          <button className="flex-1 h-[42px] rounded border-2 border-[#747474] text-white font-medium">Start Global Edit</button>
          <button aria-label="Global edit options" className="flex items-center justify-center w-11 h-[42px] rounded border-2 border-[#747474] bg-[#4b4b4b]">
            <Chevron className="text-[#c4c4c4]" />
          </button>
        </div>
      </section>
    </div>
  </div>
);

const Dock = () => (
  <aside className="flex flex-col w-[579px] shrink-0 ml-0.5 border-l-2 border-[#3a3a3a] bg-[#535353]">
    <div className="flex items-center justify-between h-6 shrink-0 pl-12 pr-2.5 bg-[#424242] border-b-2 border-[#3a3a3a]">
      <DoubleChevron />
      <DoubleChevron flip />
    </div>
    <div className="flex-1 flex">
      <div className="w-[76px] mr-0.5 border-r-2 border-[#3a3a3a]">
        <div className="flex flex-col items-center h-[82px] pt-1.5 border-b-2 border-[#3a3a3a]">
          <Grip />
          <button aria-label="Comments" className="mt-4 pl-1">
            <svg width="36" height="34" viewBox="0 0 36 34" fill={fill}>
              <path d="M4 0 H31 Q35 0 35 4 V20 Q35 24 31 24 H18 L7 34 V24 H4 Q0 24 0 20 V4 Q0 0 4 0 Z" />
            </svg>
          </button>
        </div>
      </div>
      <div className="flex-1 flex border-l-2 border-[#3a3a3a]">
        <Properties />
      </div>
    </div>
  </aside>
);

export default function App() {
  return (
    <div className="relative flex flex-col w-full h-screen overflow-hidden bg-[#535353] border-l-2 border-[#3a3a3a] font-['Noto_Sans',sans-serif]">
      <TitleBar />
      <div className="flex-1 min-h-0 flex">
        <Toolbar />
        <Document />
        <Dock />
      </div>
      <Alert />
    </div>
  );
}
